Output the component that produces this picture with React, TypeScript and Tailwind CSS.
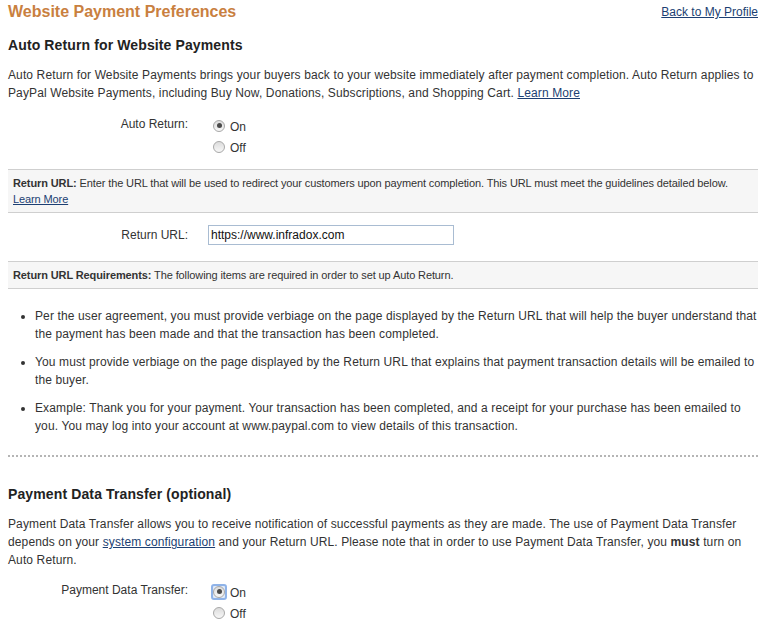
const linkCls = "text-[#1c3f73] underline";

function Radio({ checked, focused }: { checked?: boolean; focused?: boolean }) {
    const dot = (
        <span className="flex h-[12px] w-[12px] items-center justify-center rounded-full border border-[#a8a8a8] bg-gradient-to-b from-[#dcdcdc] to-[#f7f7f7]">
            {checked && <span className="h-[5px] w-[5px] rounded-full bg-[#4a4a4a]"></span>}
        </span>
    );
    if (!focused) return dot;
    return (
        <span className="-m-[2px] rounded-[3px] border-2 border-[#8fb3e8] bg-[#dfe9f8]">{dot}</span>
    );
}

function RadioGroup({ label, focused }: { label: string; focused?: boolean }) {
    return (
        <div className="flex">
            <div className="w-[180px] text-right leading-[18px]">{label}</div>
            <div className="flex flex-col pl-[25px]">
                <label className="flex h-[21px] items-center gap-[5px]">
                    <Radio checked focused={focused} />
                    <span className="mt-[3px]">On</span>
                </label>
                <label className="flex h-[21px] items-center gap-[5px]">
                    <Radio />
                    <span className="mt-[3px]">Off</span>
                </label>
            </div>
        </div>
    );
}

export default function App() {
    return (
        <div className="bg-white min-h-screen font-['Liberation_Sans',Arial,sans-serif] text-[12px] text-[#333]">
            <div className="w-[750px] ml-2 pt-[2px]">
                {/* page header */}
                <div className="flex items-center justify-between">
                    <h1 className="text-[16px] leading-[20px] font-bold text-[#c9803f]">Website Payment Preferences</h1>
                    <a href="#" className={`${linkCls} leading-[20px]`}>Back to My Profile</a>
                </div>

                {/* Auto Return */}
                <h2 className="mt-[14px] text-[14px] leading-[18px] font-bold tracking-[0.12px] text-[#222]">Auto Return for Website Payments</h2>
                <p className="mt-3 leading-[18px] tracking-[0.12px]">
                    Auto Return for Website Payments brings your buyers back to your website immediately after payment completion. Auto Return applies to PayPal Website Payments, including Buy Now, Donations, Subscriptions, and Shopping Cart.{' '}
                    <a href="#" className={linkCls}>Learn More</a>
                </p>

                <div className="mt-[13px]">
                    <RadioGroup label="Auto Return:" />
                </div>

                <div className="mt-3 border-y border-[#cfcfcf] bg-[#f6f6f6] px-[5px] py-[5px] text-[11px] leading-[16px] tracking-[-0.11px]">
                    <span className="font-bold">Return URL:</span> Enter the URL that will be used to redirect your customers upon payment completion. This URL must meet the guidelines detailed below.
                    <br />
                    <a href="#" className={linkCls}>Learn More</a>
                </div>

                <div className="mt-3 flex items-center">
                    <div className="w-[180px] text-right">Return URL:</div>
                    <input
                        type="text"
                        defaultValue="https://www.infradox.com"
                        className="ml-[20px] h-[20px] w-[246px] border border-[#a9bcd2] px-[2px] text-[12px] text-[#111] outline-none"
                    />
                </div>

                <div className="mt-4 border-y border-[#cfcfcf] bg-[#f6f6f6] px-[5px] py-[5px] text-[11px] leading-[16px] tracking-[-0.11px]">
                    <span className="font-bold">Return URL Requirements:</span> The following items are required in order to set up Auto Return.
                </div>

                <ul className="mt-[18px] list-disc pl-[27px] leading-[18px] tracking-[0.12px] flex flex-col gap-[10px]">
                    <li>Per the user agreement, you must provide verbiage on the page displayed by the Return URL that will help the buyer understand that the payment has been made and that the transaction has been completed.</li>
                    <li>You must provide verbiage on the page displayed by the Return URL that explains that payment transaction details will be emailed to the buyer.</li>
                    <li>Example: Thank you for your payment. Your transaction has been completed, and a receipt for your purchase has been emailed to you. You may log into your account at www.paypal.com to view details of this transaction.</li>
                </ul>

                <div className="mt-5 border-t-2 border-dotted border-[#b5b5b5]"></div>

                {/* Payment Data Transfer */}
                <h2 className="mt-[28px] text-[14px] leading-[18px] font-bold tracking-[0.12px] text-[#222]">Payment Data Transfer (optional)</h2>
                <p className="mt-3 leading-[18px] tracking-[0.12px]">
                    Payment Data Transfer allows you to receive notification of successful payments as they are made. The use of Payment Data Transfer depends on your{' '}
                    <a href="#" className={linkCls}>system configuration</a> and your Return URL. Please note that in order to use Payment Data Transfer, you <b>must</b> turn on Auto Return.
                </p>

                <div className="mt-3">
                    <RadioGroup label="Payment Data Transfer:" focused />
                </div>
            </div>
        </div>
    );
}
